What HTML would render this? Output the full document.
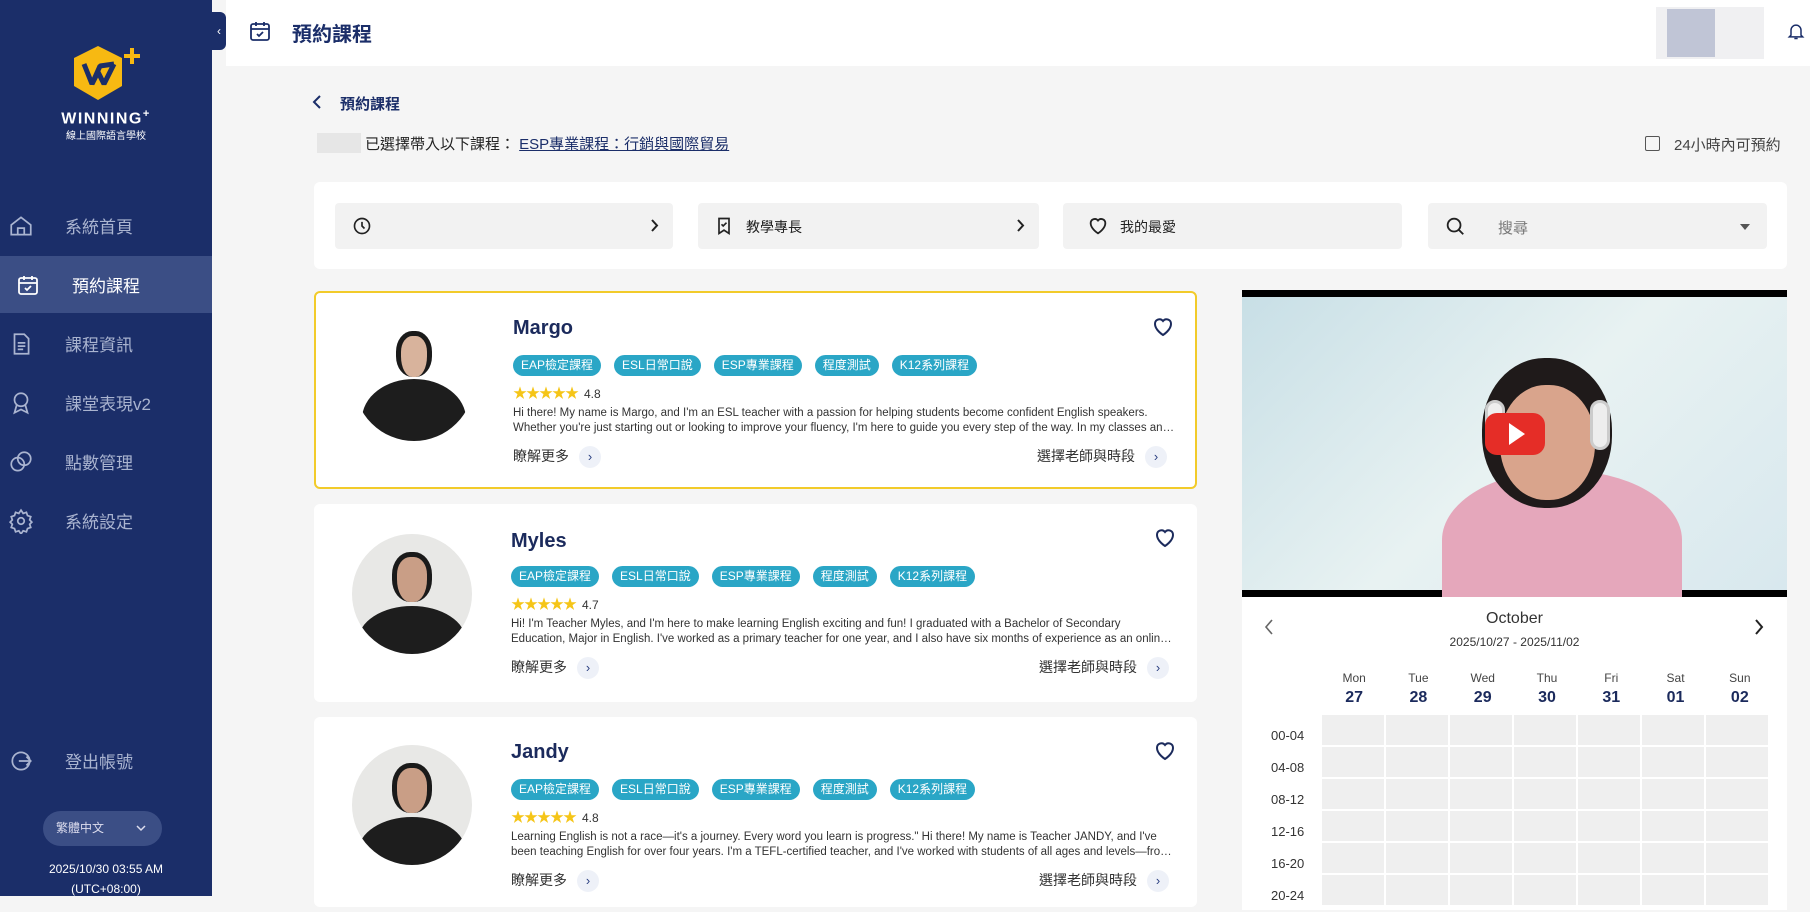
<!DOCTYPE html>
<html><head><meta charset="utf-8"><style>
*{box-sizing:border-box;margin:0;padding:0}
body{width:1810px;height:896px;overflow:hidden;background:#f5f5f5;font-family:"Liberation Sans","Noto Sans CJK TC",sans-serif;position:relative;color:#222}
.abs{position:absolute}
#side{left:0;top:0;width:212px;height:896px;background:#1b2e69}
.nav{position:absolute;left:0;width:212px;height:57px;display:flex;align-items:center;color:#aab4d0;font-size:17px}
.nav svg{position:absolute;left:8px}
.nav span{position:absolute;left:65px}
.tag{display:inline-block;background:#2aa6c6;color:#fff;font-size:12px;height:21px;line-height:21px;padding:0 8px;border-radius:11px;margin-right:13px}
.card{position:absolute;left:314px;width:883px;background:#fff;border-radius:6px}
.name{position:absolute;left:197px;font-size:20px;font-weight:bold;color:#1b2a5c}
.tags{position:absolute;left:197px}
.stars{position:absolute;left:197px;color:#f5c518;font-size:14px;letter-spacing:-1px}
.stars b{color:#333;font-weight:normal;font-size:12px;margin-left:6px;letter-spacing:0}
.desc{position:absolute;left:197px;width:665px;font-size:11.5px;line-height:15px;color:#333;white-space:nowrap;overflow:hidden;text-overflow:ellipsis}
.more{position:absolute;left:197px;font-size:14px;color:#333}
.sel{position:absolute;right:28px;font-size:14px;color:#333}
.arr{display:inline-block;width:22px;height:22px;border-radius:50%;background:#eef1f8;color:#2a3f80;text-align:center;line-height:21px;font-size:13px;margin-left:10px;vertical-align:middle}
.av{position:absolute;left:38px;width:120px;height:120px;border-radius:50%;overflow:hidden;background:#e8e8e6}
.heart{position:absolute;right:20px}
.fbox{position:absolute;top:203px;height:46px;background:#f2f2f2;border-radius:4px}
.chev{position:absolute;right:14px;top:15px}
</style></head><body>
<div id="side" class="abs">
 <svg class="abs" style="left:70px;top:44px" width="76" height="64" viewBox="0 0 76 64">
  <polygon points="28,2 52,14 52,42 28,56 4,42 4,14" fill="#f7b912"/>
  <path d="M14,20 L22,40 L28,28 L34,40 L44,20 M22,40 L30,22 L44,20" stroke="#1b2e69" stroke-width="5" fill="none" stroke-linejoin="bevel"/>
  <path d="M62,4 V20 M54,12 H70" stroke="#f7b912" stroke-width="4"/>
 </svg>
 <div class="abs" style="left:0;width:212px;top:108px;text-align:center;color:#fff;font-weight:bold;font-size:16px;letter-spacing:1.5px">WINNING<sup style="font-size:11px">+</sup></div>
 <div class="abs" style="left:0;width:212px;top:127px;text-align:center;color:#fff;font-size:10px">線上國際語言學校</div>
 <div class="nav" style="top:197px"><svg width="26" height="26" viewBox="0 0 24 24" fill="none" stroke="#aab4d0" stroke-width="1.6"><path d="M3 11L12 4l9 7v9H3z"/><path d="M9 20v-6h6v6"/></svg><span>系統首頁</span></div>
 <div class="nav" style="top:256px;background:#3b4e85;color:#fff"><svg style="left:16px" width="24" height="24" viewBox="0 0 24 24" fill="none" stroke="#fff" stroke-width="1.8"><rect x="3" y="5" width="18" height="16" rx="2"/><path d="M3 10h18M8 3v4M16 3v4M9 15l2 2 4-4"/></svg><span style="left:72px">預約課程</span></div>
 <div class="nav" style="top:315px"><svg width="26" height="26" viewBox="0 0 24 24" fill="none" stroke="#aab4d0" stroke-width="1.6"><path d="M6 3h9l4 4v14H6z"/><path d="M9 11h7M9 14h7M9 17h5"/></svg><span>課程資訊</span></div>
 <div class="nav" style="top:374px"><svg width="26" height="26" viewBox="0 0 24 24" fill="none" stroke="#aab4d0" stroke-width="1.6"><circle cx="12" cy="9" r="6"/><path d="M8 14l-2 7 6-3 6 3-2-7"/></svg><span>課堂表現v2</span></div>
 <div class="nav" style="top:433px"><svg width="26" height="26" viewBox="0 0 24 24" fill="none" stroke="#aab4d0" stroke-width="1.6"><circle cx="9" cy="14" r="6"/><circle cx="15" cy="9" r="6"/></svg><span>點數管理</span></div>
 <div class="nav" style="top:492px"><svg width="26" height="26" viewBox="0 0 24 24" fill="none" stroke="#aab4d0" stroke-width="1.6"><circle cx="12" cy="12" r="3"/><path d="M12 2l2 3 3-1 1 3 3 1-1 3 2 2-2 2 1 3-3 1-1 3-3-1-2 3-2-3-3 1-1-3-3-1 1-3-2-2 2-2-1-3 3-1 1-3 3 1z"/></svg><span>系統設定</span></div>
 <div class="nav" style="top:732px"><svg width="26" height="26" viewBox="0 0 24 24" fill="none" stroke="#aab4d0" stroke-width="1.6"><circle cx="12" cy="12" r="8"/><path d="M10 12h11M17 8l4 4-4 4"/></svg><span>登出帳號</span></div>
 <div class="abs" style="left:43px;top:811px;width:119px;height:35px;border-radius:18px;background:#3b4e85;color:#dde;font-size:12px;line-height:35px;padding-left:13px">繁體中文 <svg style="position:absolute;right:16px;top:14px" width="10" height="7" viewBox="0 0 10 7" fill="none" stroke="#dde" stroke-width="1.5"><path d="M1 1l4 4 4-4"/></svg></div>
 <div class="abs" style="left:0;width:212px;top:859px;text-align:center;color:#fff;font-size:12px;line-height:20px">2025/10/30 03:55 AM<br>(UTC+08:00)</div>
</div>
<div class="abs" style="left:212px;top:12px;width:14px;height:38px;background:#1b2e69;border-radius:0 6px 6px 0;color:#fff;font-size:12px;line-height:38px;text-align:center">‹</div>
<div class="abs" style="left:226px;top:0;width:1584px;height:66px;background:#fff"></div>
<svg class="abs" style="left:248px;top:19px" width="24" height="24" viewBox="0 0 24 24" fill="none" stroke="#1b2e69" stroke-width="1.8"><rect x="3" y="5" width="18" height="16" rx="2"/><path d="M3 10h18M8 3v4M16 3v4M9 15l2 2 4-4"/></svg>
<div class="abs" style="left:292px;top:18px;font-size:20px;font-weight:bold;color:#1b2e69">預約課程</div>
<div class="abs" style="left:1656px;top:7px;width:108px;height:52px;background:#f0f0f2"></div>
<div class="abs" style="left:1667px;top:9px;width:48px;height:48px;background:#c0c5d6"></div>
<svg class="abs" style="left:1786px;top:20px" width="20" height="22" viewBox="0 0 24 24" fill="none" stroke="#1b2e69" stroke-width="1.8"><path d="M6 17V11a6 6 0 0112 0v6l2 2H4z"/><path d="M10 21h4"/></svg>
<svg class="abs" style="left:312px;top:95px" width="10" height="14" viewBox="0 0 10 14" fill="none" stroke="#1b2e69" stroke-width="2"><path d="M8 1L2 7l6 6"/></svg>
<div class="abs" style="left:340px;top:93px;font-size:15px;font-weight:bold;color:#1b2e69">預約課程</div>
<div class="abs" style="left:317px;top:133px;width:44px;height:20px;background:#e6e6e6"></div>
<div class="abs" style="left:365px;top:133px;font-size:15px;color:#222">已選擇帶入以下課程： <u style="color:#1b2e69">ESP專業課程：行銷與國際貿易</u></div>
<div class="abs" style="left:1645px;top:136px;width:15px;height:15px;border:1.5px solid #555;border-radius:2px"></div>
<div class="abs" style="left:1674px;top:134px;font-size:15px;color:#444">24小時內可預約</div>
<div class="abs" style="left:314px;top:182px;width:1473px;height:87px;background:#fff;border-radius:6px"></div>
<div class="fbox" style="left:335px;width:338px"><svg class="abs" style="left:17px;top:13px" width="20" height="20" viewBox="0 0 24 24" fill="none" stroke="#222" stroke-width="2"><circle cx="12" cy="12" r="9"/><path d="M12 7v5l3 3"/></svg><svg class="chev" width="9" height="15" viewBox="0 0 9 15" fill="none" stroke="#222" stroke-width="2"><path d="M2 2l5 5.5L2 13"/></svg></div>
<div class="fbox" style="left:698px;width:341px"><svg class="abs" style="left:16px;top:13px" width="20" height="20" viewBox="0 0 24 24" fill="none" stroke="#222" stroke-width="2"><path d="M6 3h12v18l-6-4-6 4z"/><path d="M9 10l2 2 4-4"/></svg><span class="abs" style="left:48px;top:14px;font-size:14px">教學專長</span><svg class="chev" width="9" height="15" viewBox="0 0 9 15" fill="none" stroke="#222" stroke-width="2"><path d="M2 2l5 5.5L2 13"/></svg></div>
<div class="fbox" style="left:1063px;width:339px"><svg class="abs" style="left:24px;top:12px" width="22" height="22" viewBox="0 0 24 24" fill="none" stroke="#222" stroke-width="2"><path d="M12 20s-8-5-8-11a4.5 4.5 0 018-3 4.5 4.5 0 018 3c0 6-8 11-8 11z"/></svg><span class="abs" style="left:57px;top:14px;font-size:14px">我的最愛</span></div>
<div class="fbox" style="left:1428px;width:339px"><svg class="abs" style="left:16px;top:12px" width="22" height="22" viewBox="0 0 24 24" fill="none" stroke="#222" stroke-width="2"><circle cx="11" cy="11" r="7"/><path d="M16 16l5 5"/></svg><span class="abs" style="left:70px;top:14px;font-size:15px;color:#777">搜尋</span><svg class="abs" style="right:17px;top:21px" width="10" height="6" viewBox="0 0 10 6"><path d="M0 0h10L5 6z" fill="#555"/></svg></div>

<div class="card" style="top:291px;height:198px;border:2px solid #f2cb2a">
 <div class="av" style="top:28px;background:#fff"><div class="abs" style="left:42px;top:10px;width:36px;height:46px;border-radius:45%;background:#d8b39c;border:5px solid #1a1a1a;border-bottom:none"></div><div class="abs" style="left:8px;top:58px;width:104px;height:80px;border-radius:50% 50% 0 0;background:#1d1d1d"></div></div>
 <div class="name" style="top:24px">Margo</div>
 <div class="tags" style="top:62px"><span class="tag">EAP檢定課程</span><span class="tag">ESL日常口說</span><span class="tag">ESP專業課程</span><span class="tag">程度測試</span><span class="tag">K12系列課程</span></div>
 <div class="stars" style="top:90px">★★★★★<b>4.8</b></div>
 <div class="desc" style="top:113px">Hi there! My name is Margo, and I'm an ESL teacher with a passion for helping students become confident English speakers.<br>Whether you're just starting out or looking to improve your fluency, I'm here to guide you every step of the way. In my classes and beyond</div>
 <div class="more" style="top:153px">瞭解更多<span class="arr">›</span></div>
 <div class="sel" style="top:153px">選擇老師與時段<span class="arr">›</span></div>
 <svg class="heart" style="top:22px" width="24" height="24" viewBox="0 0 24 24" fill="none" stroke="#1b2a5c" stroke-width="2"><path d="M12 20s-8-5-8-11a4.5 4.5 0 018-3 4.5 4.5 0 018 3c0 6-8 11-8 11z"/></svg>
</div>
<div class="card" style="top:504px;height:198px">
 <div class="av" style="top:30px"><div class="abs" style="left:40px;top:18px;width:40px;height:50px;border-radius:45%;background:#c99e86;border:5px solid #1a1a1a;border-bottom:none"></div><div class="abs" style="left:6px;top:72px;width:108px;height:70px;border-radius:50% 50% 0 0;background:#1d1d1d"></div></div>
 <div class="name" style="top:26px">Myles</div>
 <div class="tags" style="top:62px"><span class="tag">EAP檢定課程</span><span class="tag">ESL日常口說</span><span class="tag">ESP專業課程</span><span class="tag">程度測試</span><span class="tag">K12系列課程</span></div>
 <div class="stars" style="top:90px">★★★★★<b>4.7</b></div>
 <div class="desc" style="top:113px">Hi! I'm Teacher Myles, and I'm here to make learning English exciting and fun! I graduated with a Bachelor of Secondary<br>Education, Major in English. I've worked as a primary teacher for one year, and I also have six months of experience as an online teacher</div>
 <div class="more" style="top:153px">瞭解更多<span class="arr">›</span></div>
 <div class="sel" style="top:153px">選擇老師與時段<span class="arr">›</span></div>
 <svg class="heart" style="top:22px" width="24" height="24" viewBox="0 0 24 24" fill="none" stroke="#1b2a5c" stroke-width="2"><path d="M12 20s-8-5-8-11a4.5 4.5 0 018-3 4.5 4.5 0 018 3c0 6-8 11-8 11z"/></svg>
</div>
<div class="card" style="top:717px;height:190px">
 <div class="av" style="top:28px"><div class="abs" style="left:40px;top:18px;width:40px;height:50px;border-radius:45%;background:#c99e86;border:5px solid #1a1a1a;border-bottom:none"></div><div class="abs" style="left:6px;top:72px;width:108px;height:70px;border-radius:50% 50% 0 0;background:#1d1d1d"></div></div>
 <div class="name" style="top:24px">Jandy</div>
 <div class="tags" style="top:62px"><span class="tag">EAP檢定課程</span><span class="tag">ESL日常口說</span><span class="tag">ESP專業課程</span><span class="tag">程度測試</span><span class="tag">K12系列課程</span></div>
 <div class="stars" style="top:90px">★★★★★<b>4.8</b></div>
 <div class="desc" style="top:113px">Learning English is not a race—it's a journey. Every word you learn is progress." Hi there! My name is Teacher JANDY, and I've<br>been teaching English for over four years. I'm a TEFL-certified teacher, and I've worked with students of all ages and levels—from kids</div>
 <div class="more" style="top:153px">瞭解更多<span class="arr">›</span></div>
 <div class="sel" style="top:153px">選擇老師與時段<span class="arr">›</span></div>
 <svg class="heart" style="top:22px" width="24" height="24" viewBox="0 0 24 24" fill="none" stroke="#1b2a5c" stroke-width="2"><path d="M12 20s-8-5-8-11a4.5 4.5 0 018-3 4.5 4.5 0 018 3c0 6-8 11-8 11z"/></svg>
</div>

<div class="abs" style="left:1242px;top:290px;width:545px;height:620px;background:#fff"></div>
<div class="abs" style="left:1242px;top:290px;width:545px;height:307px;background:#000;overflow:hidden">
 <div class="abs" style="left:0;top:7px;width:545px;height:293px;background:linear-gradient(135deg,#c8dfe6,#e8f2f2 50%,#d8e8ee)"></div>
 <div class="abs" style="left:200px;top:180px;width:240px;height:140px;border-radius:50% 50% 0 0;background:#e5a7bb"></div>
 <div class="abs" style="left:240px;top:68px;width:130px;height:150px;border-radius:48%;background:#1f1a1a"></div>
 <div class="abs" style="left:258px;top:95px;width:95px;height:115px;border-radius:48%;background:#d9a48c"></div>
 <div class="abs" style="left:243px;top:110px;width:20px;height:50px;border-radius:10px;background:#eee;border:3px solid #ccc"></div>
 <div class="abs" style="left:348px;top:110px;width:20px;height:50px;border-radius:10px;background:#eee;border:3px solid #ccc"></div>
 <div class="abs" style="left:243px;top:123px;width:60px;height:42px;border-radius:12px;background:#e52d27"></div>
 <div class="abs" style="left:267px;top:133px;width:0;height:0;border-left:16px solid #fff;border-top:11px solid transparent;border-bottom:11px solid transparent"></div>
</div>
<svg class="abs" style="left:1264px;top:619px" width="10" height="16" viewBox="0 0 10 16" fill="none" stroke="#666" stroke-width="1.6"><path d="M8 1L2 8l6 7"/></svg>
<svg class="abs" style="left:1754px;top:619px" width="10" height="16" viewBox="0 0 10 16" fill="none" stroke="#222" stroke-width="2"><path d="M2 1l6 7-6 7"/></svg>
<div class="abs" style="left:1242px;top:610px;width:545px;text-align:center;font-size:16px;color:#333">October</div>
<div class="abs" style="left:1242px;top:635px;width:545px;text-align:center;font-size:12px;color:#333">2025/10/27 - 2025/11/02</div>
<div class="abs" style="left:1322px;top:671px;width:450px;font-size:12px;color:#444;display:flex">
 <div style="width:64.3px;text-align:center">Mon<br><b style="font-size:16px;color:#1b2a5c;line-height:26px">27</b></div><div style="width:64.3px;text-align:center">Tue<br><b style="font-size:16px;color:#1b2a5c;line-height:26px">28</b></div><div style="width:64.3px;text-align:center">Wed<br><b style="font-size:16px;color:#1b2a5c;line-height:26px">29</b></div><div style="width:64.3px;text-align:center">Thu<br><b style="font-size:16px;color:#1b2a5c;line-height:26px">30</b></div><div style="width:64.3px;text-align:center">Fri<br><b style="font-size:16px;color:#1b2a5c;line-height:26px">31</b></div><div style="width:64.3px;text-align:center">Sat<br><b style="font-size:16px;color:#1b2a5c;line-height:26px">01</b></div><div style="width:64.3px;text-align:center">Sun<br><b style="font-size:16px;color:#1b2a5c;line-height:26px">02</b></div>
</div>
<div class="abs" style="left:1271px;top:720px;font-size:13px;color:#333;line-height:32px">00-04<br>04-08<br>08-12<br>12-16<br>16-20<br>20-24</div>
<svg class="abs" style="left:1322px;top:715px" width="448" height="190">
 <defs><pattern id="g" width="64" height="32" patternUnits="userSpaceOnUse"><rect width="62" height="30" fill="#efefef"/></pattern></defs>
 <rect width="448" height="190" fill="url(#g)"/>
</svg>
</body></html>
